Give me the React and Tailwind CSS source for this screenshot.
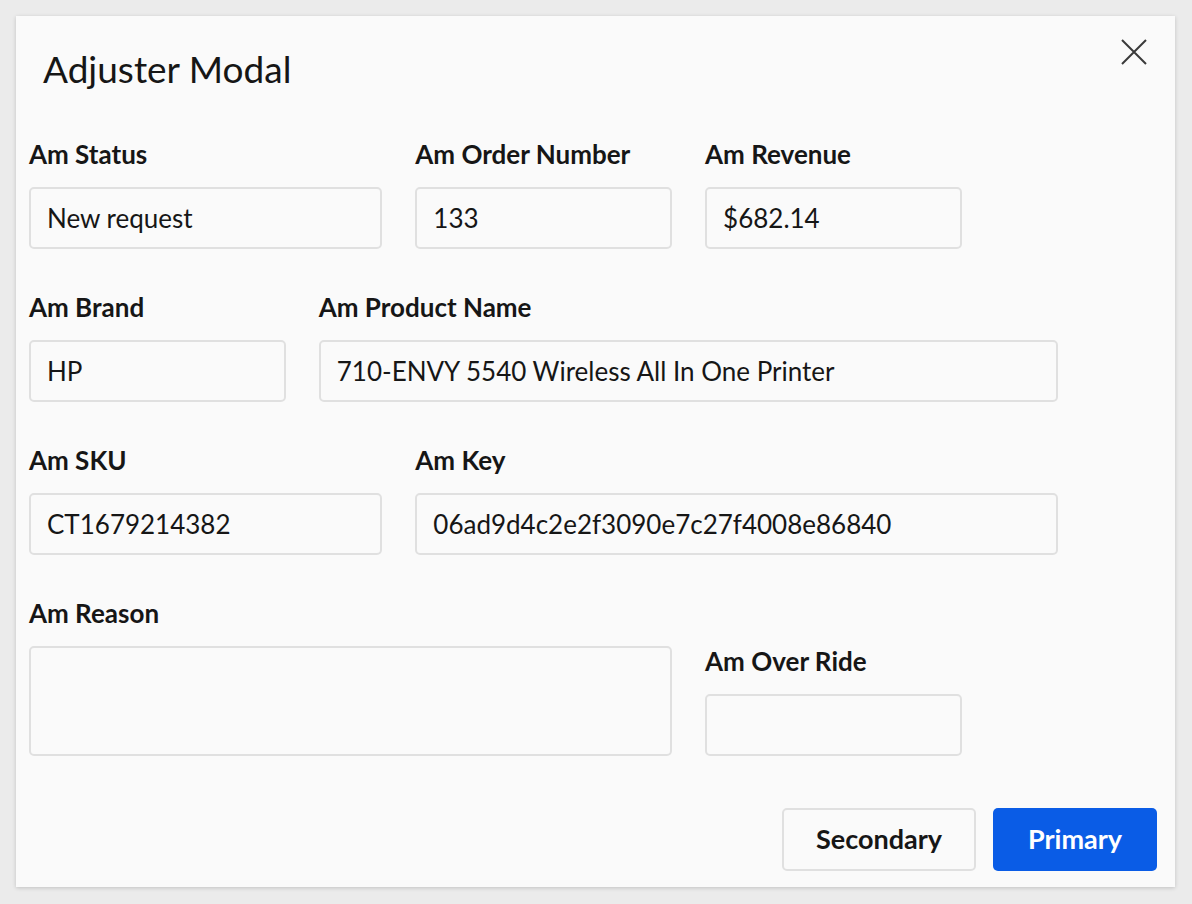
import React from "react";

const font = { fontFamily: "Lato, 'Noto Sans', sans-serif" };

function Field({ label, value, span, className = "", tall = false }) {
  return (
    <div className={`flex flex-col ${span} ${className}`}>
      <div className="text-[26px] leading-[32px] font-bold text-[#161616] mb-[17px]">{label}</div>
      <div
        className={`w-full rounded-[5px] border-2 border-[#e0e0e0] bg-[#fafafa] px-[16px] flex items-center text-[26px] text-[#161616] whitespace-nowrap overflow-hidden ${
          tall ? "h-[110px]" : "h-[62px]"
        }`}
      >
        {value}
      </div>
    </div>
  );
}

export default function App() {
  return (
    <div className="w-[1192px] h-[904px] bg-[#ebebeb] pt-[16px] pl-[16px]" style={font}>
      <div className="w-[1159px] h-[871px] bg-[#fafafa] shadow-[0_1px_4px_rgba(0,0,0,0.18)] flex flex-col pl-[13px] pr-[18px] pb-[16px]">
        <div className="flex items-start justify-between h-[122px] pl-[14px]">
          <div className="text-[37px] leading-[44px] text-[#161616] mt-[31px]">Adjuster Modal</div>
          <button className="w-[26px] h-[26px] flex items-center justify-center mt-[23px] mr-[10px]">
            <svg width="26" height="26" viewBox="0 0 26 26" fill="none" stroke="#3a3a3a" strokeWidth="2">
              <path d="M1 1 L25 25 M25 1 L1 25" />
            </svg>
          </button>
        </div>
        <div className="grid grid-cols-12 gap-x-[33px] gap-y-[42px] w-[1126px]">
          <Field label="Am Status" value="New request" span="col-span-4" />
          <Field label="Am Order Number" value="133" span="col-span-3" />
          <Field label="Am Revenue" value="$682.14" span="col-span-3" />
          <div className="col-span-2" />
          <Field label="Am Brand" value="HP" span="col-span-3" />
          <Field label="Am Product Name" value="710-ENVY 5540 Wireless All In One Printer" span="col-span-8" />
          <div className="col-span-1" />
          <Field label="Am SKU" value="CT1679214382" span="col-span-4" />
          <Field label="Am Key" value="06ad9d4c2e2f3090e7c27f4008e86840" span="col-span-7" />
          <div className="col-span-1" />
          <Field label="Am Reason" value="" span="col-span-7" tall />
          <Field label="Am Over Ride" value="" span="col-span-3 justify-end" />
          <div className="col-span-2" />
        </div>
        <div className="flex-1" />
        <div className="flex justify-end gap-[17px]">
          <button className="w-[194px] h-[63px] rounded-[5px] border-2 border-[#e0e0e0] bg-[#fafafa] text-[27px] font-bold text-[#161616]">
            Secondary
          </button>
          <button className="w-[164px] h-[63px] rounded-[5px] bg-[#0a5ce6] text-[27px] font-bold text-white">
            Primary
          </button>
        </div>
      </div>
    </div>
  );
}
